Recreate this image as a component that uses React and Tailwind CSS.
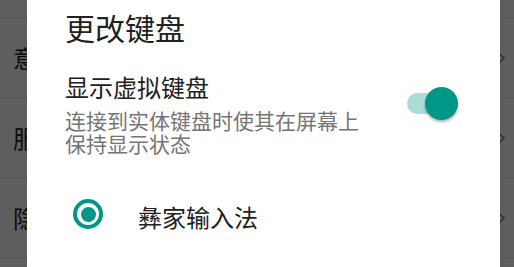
import React, { useState } from 'react';

const items = ['账号与安全', '意见反馈', '服务条款', '隐私政策', '关于'];

export default function App() {
  const [showKeyboard, setShowKeyboard] = useState(true);

  return (
    <div
      className="relative w-[514px] h-[267px] overflow-hidden bg-white"
      style={{ fontFamily: '"Noto Sans CJK SC", "Noto Sans", sans-serif' }}
    >
      {/* settings list behind the dialog */}
      <div className="-mt-[62px]">
        {items.map((item) => (
          <div
            key={item}
            className="flex items-center justify-between h-[80px] pl-[13px] pr-[8px] border-b border-[#e6e6e6] text-[24px] text-[#222]"
          >
            <span>{item}</span>
            <svg width="10" height="16" viewBox="0 0 10 16" className="text-[#999]">
              <path d="M2 2l6 6-6 6" fill="none" stroke="currentColor" strokeWidth="2" />
            </svg>
          </div>
        ))}
      </div>

      {/* scrim */}
      <div className="absolute inset-0 bg-black/[0.63]" />

      {/* dialog */}
      <div className="absolute top-0 bottom-0 left-[27px] right-[14px] bg-white pl-[38px] pr-[42px] pt-[9px]">
        <h2 className="text-[30px] leading-[36px] text-[#212121]">更改键盘</h2>

        <div className="flex items-start justify-between mt-[27px]">
          <div>
            <div className="text-[24px] leading-[30px] text-[#212121] mb-[7px]">显示虚拟键盘</div>
            <p className="w-[300px] text-[21px] leading-[23px] text-[#757575]">
              连接到实体键盘时使其在屏幕上保持显示状态
            </p>
          </div>
          <button
            onClick={() => setShowKeyboard(!showKeyboard)}
            className="relative mt-[21px] w-[51px] h-[21px] rounded-full bg-[#acdcd7]"
          >
            <span
              className={`absolute -top-[6px] w-[33px] h-[33px] rounded-full bg-[#009688] shadow-[0_2px_3px_rgba(0,0,0,0.3)] ${showKeyboard ? 'right-0' : 'left-0'}`}
            />
          </button>
        </div>

        <div className="flex items-center h-[40px] mt-[40px]">
          <span className="ml-[8px] mb-[2px] flex items-center justify-center w-[30px] h-[30px] rounded-full border-[4px] border-[#009688]">
            <span className="w-[15px] h-[15px] rounded-full bg-[#009688]" />
          </span>
          <span className="ml-[35px] mt-[3px] text-[24px] leading-[30px] text-[#212121]">彝家输入法</span>
        </div>
      </div>
    </div>
  );
}
